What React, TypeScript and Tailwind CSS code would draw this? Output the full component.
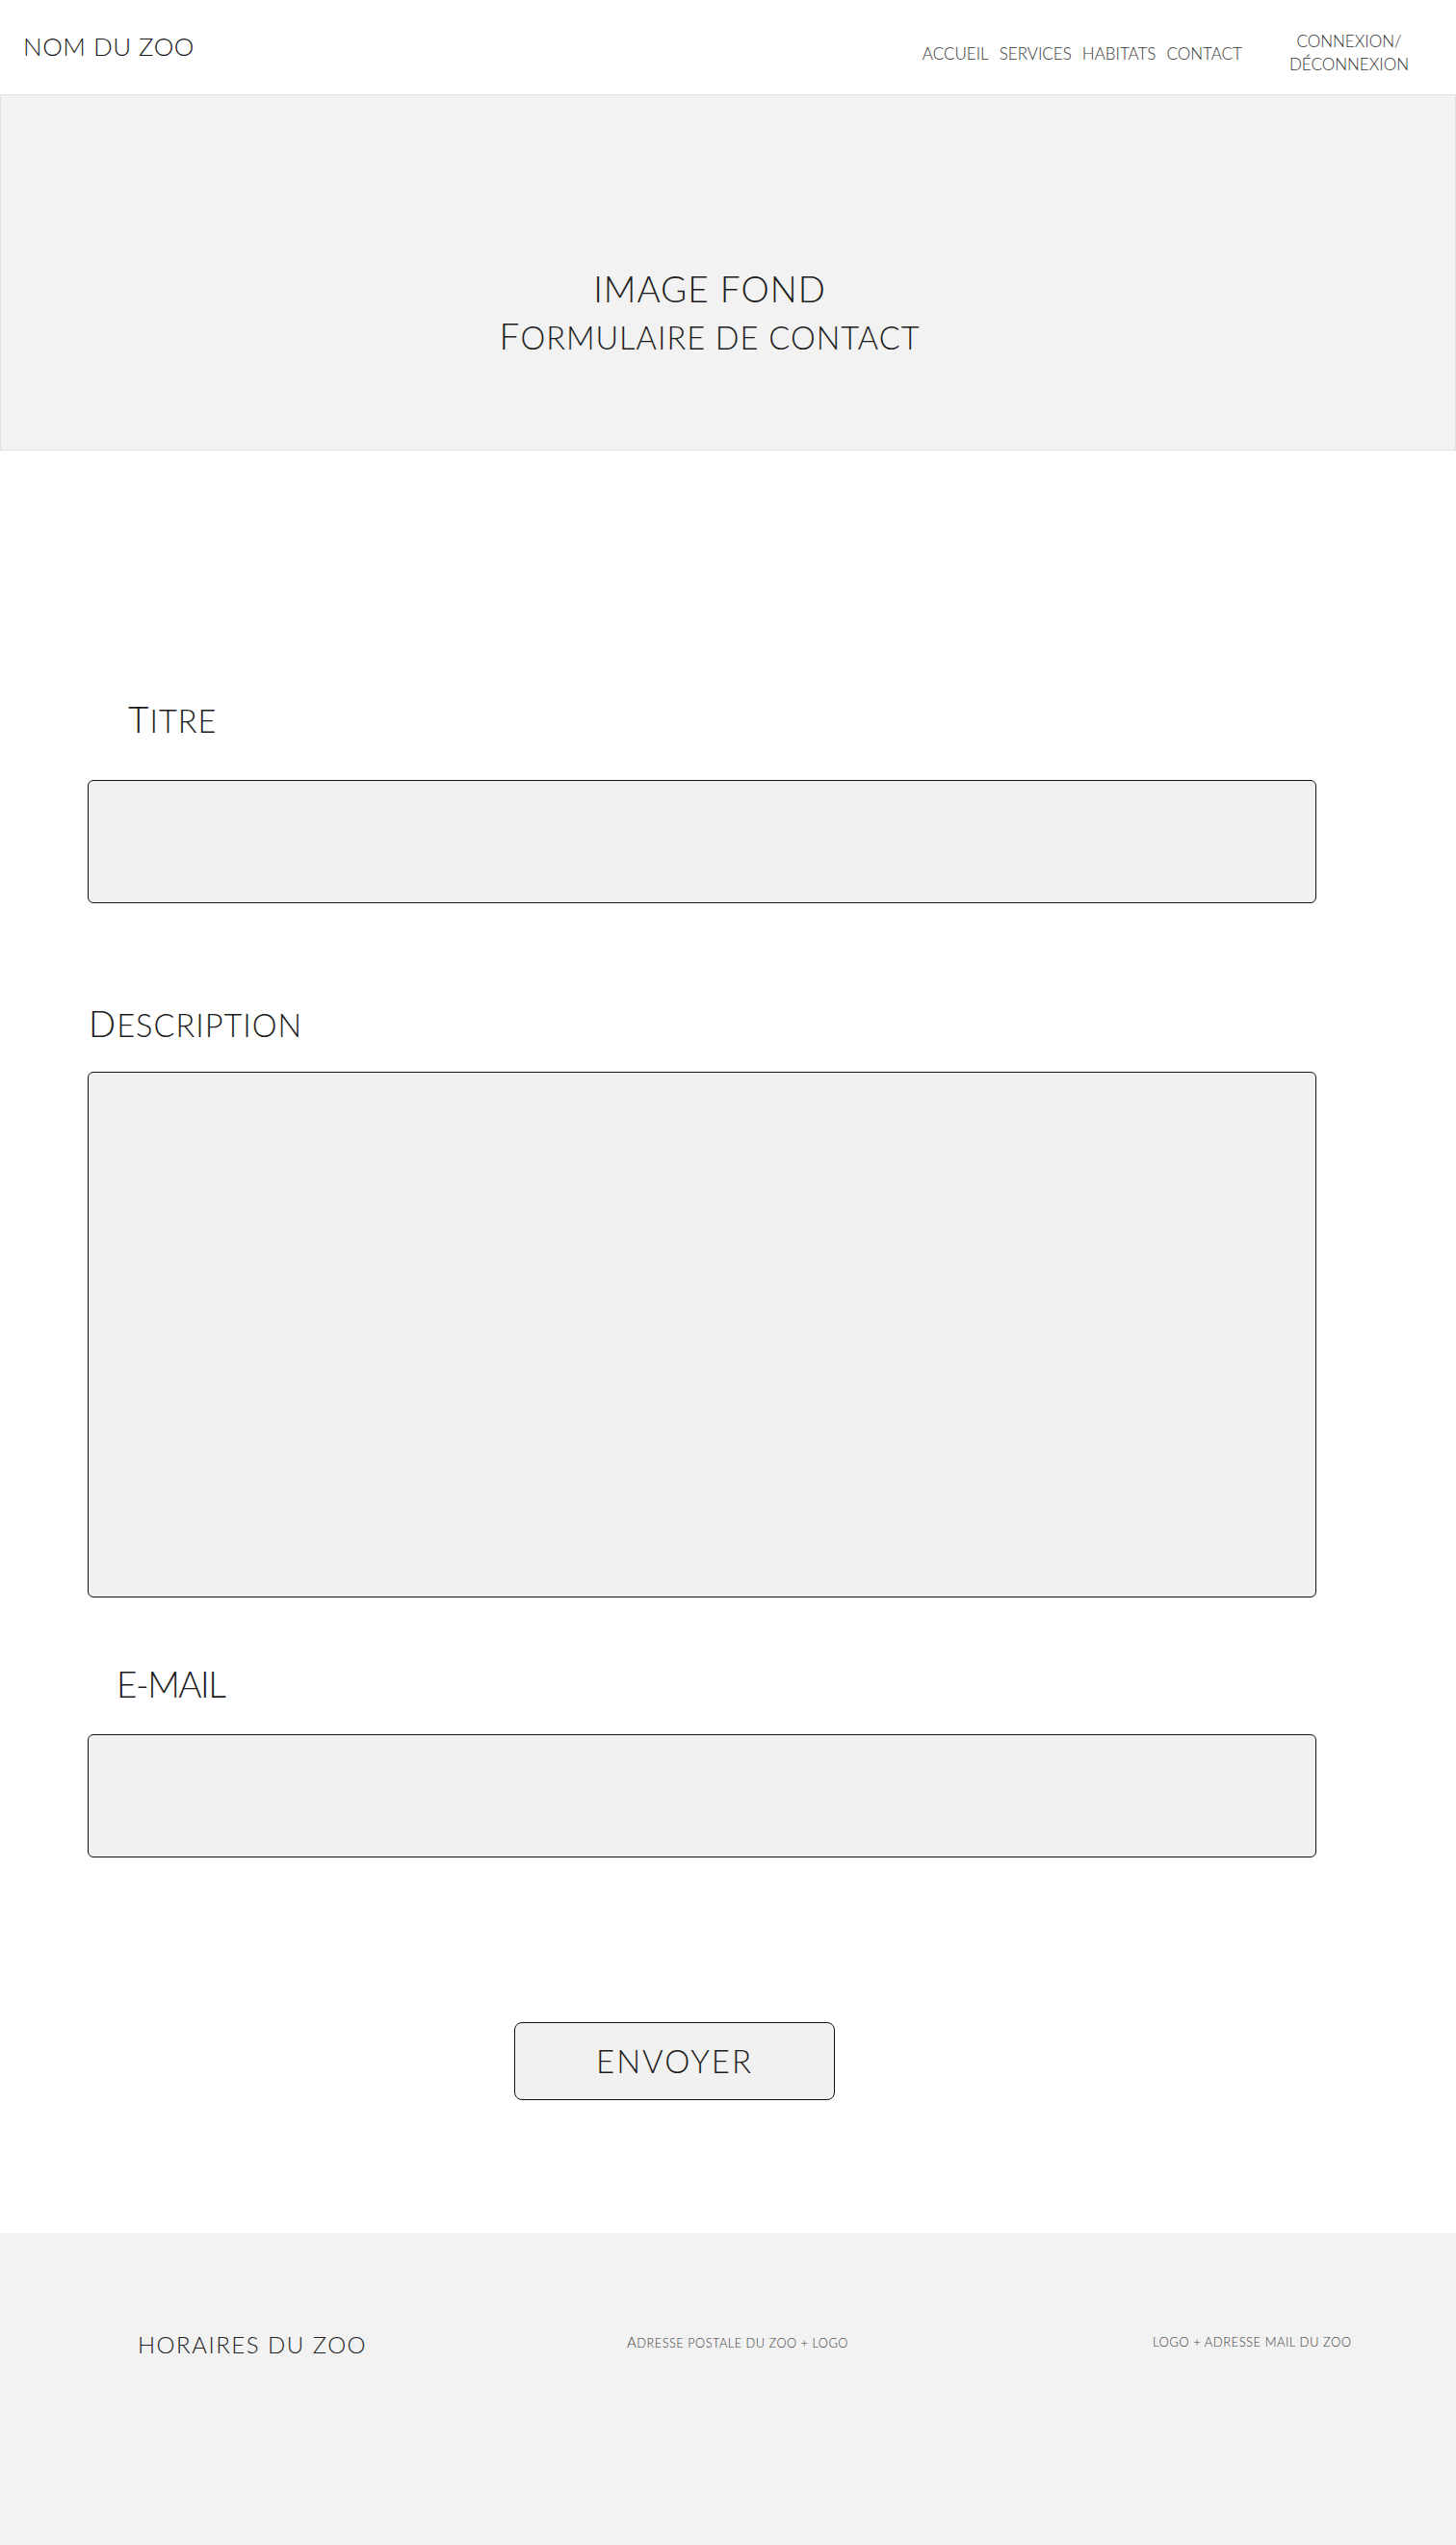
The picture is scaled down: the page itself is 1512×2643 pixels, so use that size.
const font = "font-['Lato','Open_Sans',sans-serif] font-light";

function Label({
  first,
  rest,
  className,
  tracking = "tracking-[1px]",
}: {
  first: string;
  rest: string;
  className?: string;
  tracking?: string;
}) {
  return (
    <div className={`text-[37px] leading-none text-[#1c1c1c] ${tracking} ${className ?? ""}`}>
      <span>{first}</span>
      <span className="uppercase text-[0.88em]">{rest}</span>
    </div>
  );
}

function Field({ height }: { height: string }) {
  return (
    <div className={`w-[1276px] ${height} bg-[#f1f1f1] border-[1.5px] border-[#111] rounded-[6px]`} />
  );
}

export default function App() {
  return (
    <div className={`w-[1512px] min-h-[2643px] bg-white flex flex-col ${font}`}>
      {/* Header */}
      <header className="h-[98px] flex items-center justify-between pl-[24px] pr-[49px]">
        <div className="text-[26px] tracking-[0.5px] text-[#1c1c1c] leading-none pb-[2px]">NOM DU ZOO</div>
        <div className="flex items-center gap-[49px]">
          <nav className="flex items-center gap-[11px] text-[17px] text-[#333] leading-none pt-[12px]">
            <a>ACCUEIL</a>
            <a>SERVICES</a>
            <a>HABITATS</a>
            <a>CONTACT</a>
          </nav>
          <div className="text-[17px] text-[#333] leading-[24px] text-center pt-[12px]">
            CONNEXION/
            <br />
            DÉCONNEXION
          </div>
        </div>
      </header>

      {/* Hero */}
      <section className="h-[370px] bg-[#f2f2f2] border border-[#e0e0e0] flex flex-col items-center justify-center pr-[38px] pt-[84px] text-[#1c1c1c]">
        <div className="text-[37px] leading-[49px] tracking-[1px]">IMAGE FOND</div>
        <div className="text-[37px] leading-[49px] tracking-[1px]">
          <span>F</span>
          <span className="uppercase text-[0.88em]">ormulaire de contact</span>
        </div>
      </section>

      {/* Form */}
      <main className="flex flex-col pl-[91px] pt-[260px]">
        <Label first="T" rest="itre" className="ml-[42px]" />
        <div className="h-[44px]" />
        <Field height="h-[128px]" />

        <Label first="D" rest="escription" className="mt-[106px] ml-[1px]" />
        <div className="h-[32px]" />
        <Field height="h-[546px]" />

        <Label first="E-MAIL" rest="" className="mt-[71px] ml-[30px]" tracking="tracking-[-1.5px]" />
        <div className="h-[33px]" />
        <Field height="h-[128px]" />

        <button className="mt-[171px] ml-[443px] w-[333px] h-[81px] bg-[#f1f1f1] border-[1.5px] border-[#111] rounded-[8px] text-[33px] tracking-[2px] text-[#1c1c1c] leading-none">
          ENVOYER
        </button>
      </main>

      {/* Footer */}
      <footer className="mt-[138px] h-[324px] bg-[#f2f2f2] flex items-start pt-[104px] text-[#3a3a3a]">
        <div className="w-[651px] pl-[143px] text-[24px] tracking-[1.5px] leading-none text-[#222]">HORAIRES DU ZOO</div>
        <div className="w-[546px] text-[15px] tracking-[0.5px] leading-none pt-[2px]">
          <span>A</span>
          <span className="uppercase text-[0.85em]">dresse postale du zoo + logo</span>
        </div>
        <div className="uppercase text-[13px] tracking-[0.5px] leading-none pt-[3px]">logo + adresse mail du zoo</div>
      </footer>
    </div>
  );
}
